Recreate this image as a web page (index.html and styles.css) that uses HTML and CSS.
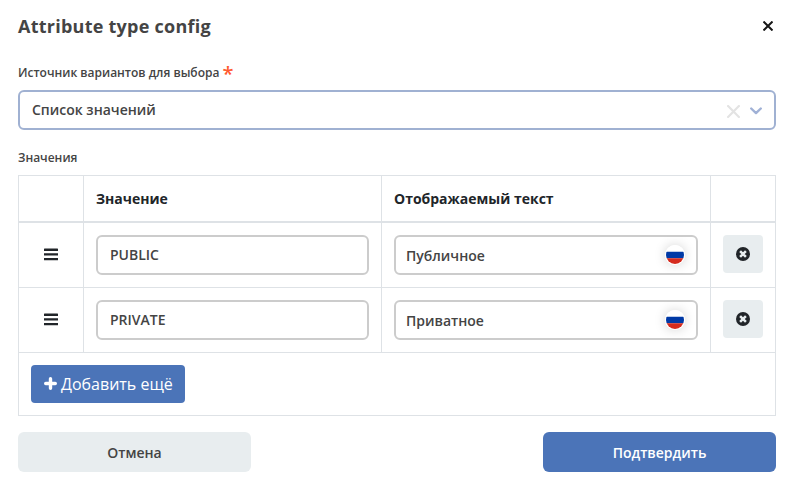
FILE: index.html
```html
<!DOCTYPE html>
<html lang="ru">
<head>
<meta charset="utf-8">
<title>Attribute type config</title>
<link rel="stylesheet" href="styles.css">
</head>
<body>
<svg width="0" height="0" class="defs">
  <symbol id="bars" viewBox="0 0 14 13"><path d="M.4.6h13.2q.4 0 .4.4v2H0V1Q0 .6.4.6zM0 5.2h14v2.4H0zM0 9.9h14V12q0 .3-.4.3H.4Q0 12.3 0 12z"/></symbol>
  <symbol id="remove" viewBox="0 0 14 14"><circle cx="7" cy="7" r="7"/><path d="M4.1 4.1l5.8 5.8M9.9 4.1L4.1 9.9" stroke="#e8edef" stroke-width="2.5"/></symbol>
  <symbol id="flag" viewBox="0 0 20 20"><clipPath id="round"><circle cx="10" cy="10" r="9"/></clipPath><circle cx="10" cy="10" r="10" fill="#fff"/><g clip-path="url(#round)"><path fill="#0039a6" d="M0 6.7h20v6.6H0z"/><path fill="#d52b1e" d="M0 13.3h20V20H0z"/></g></symbol>
</svg>
<main class="dialog">
  <header class="head">
    <h1 class="title">Attribute type config</h1>
    <svg class="close" viewBox="0 0 10 10"><path d="M.5.5l9 9M9.5.5l-9 9"/></svg>
  </header>
  <div class="label source">Источник вариантов для выбора <span class="star">*</span></div>
  <div class="select">
    <span class="select-text">Список значений</span>
    <svg class="clear" viewBox="0 0 12 12"><path d="M1 1l10 10M11 1L1 11"/></svg>
    <svg class="chevron" viewBox="0 0 12 8"><path d="M1.2 1.5l4.8 4.6 4.8-4.6"/></svg>
  </div>
  <div class="label values">Значения</div>
  <div class="table">
    <div class="row th">
      <div class="cell"></div><div class="cell">Значение</div><div class="cell">Отображаемый текст</div><div class="cell"></div>
    </div>
    <div class="row">
      <div class="cell grip"><svg class="bars"><use href="#bars"/></svg></div>
      <div class="cell"><div class="input">PUBLIC</div></div>
      <div class="cell"><div class="input localized"><span>Публичное</span><div class="flag"><svg><use href="#flag"/></svg></div></div></div>
      <div class="cell"><div class="remove"><svg><use href="#remove"/></svg></div></div>
    </div>
    <div class="row">
      <div class="cell grip"><svg class="bars"><use href="#bars"/></svg></div>
      <div class="cell"><div class="input">PRIVATE</div></div>
      <div class="cell"><div class="input localized"><span>Приватное</span><div class="flag"><svg><use href="#flag"/></svg></div></div></div>
      <div class="cell"><div class="remove"><svg><use href="#remove"/></svg></div></div>
    </div>
    <div class="foot">
      <div class="add"><svg viewBox="0 0 13 13"><path d="M6.5 1.7v9.6M1.7 6.5h9.6"/></svg><span>Добавить ещё</span></div>
    </div>
  </div>
  <footer class="actions">
    <div class="action cancel">Отмена</div>
    <div class="action confirm">Подтвердить</div>
  </footer>
</main>
</body>
</html>
```
FILE: styles.css
```css
* { box-sizing: border-box; }
body { margin: 0; background: #fff; color: #444; font-family: "Open Sans", "Noto Sans", sans-serif; font-size: 14px; font-weight: 600; }
svg { display: block; fill: none; stroke-linecap: round; stroke-linejoin: round; }
.defs { position: absolute; }
.dialog { width: 792px; height: 497px; padding: 14px 16px 0 18px; }
.head { display: flex; justify-content: space-between; height: 25px; }
.title { margin: 0; font-size: 18px; line-height: 25px; font-weight: 700; letter-spacing: .25px; }
.close { width: 10px; height: 10px; margin: 7px 3px 0 0; stroke: #161616; stroke-width: 2; stroke-linecap: butt; }
.label { font-size: 12px; line-height: 18px; }
.source { display: flex; margin-top: 25px; height: 18px; }
.star { margin-left: 3px; color: #ff5a30; font-size: 20px; line-height: 19px; }
.select { display: flex; align-items: center; margin-top: 8px; height: 40px; border: 2px solid #a0b1d2; border-radius: 6px; padding: 0 12px; }
.select-text { flex: 1; line-height: 20px; }
.clear { width: 13px; height: 13px; margin: 3px 10px 0 0; stroke: #e3e3e3; stroke-width: 2; }
.chevron { width: 12px; height: 8px; margin-top: 2px; stroke: #a0b1d6; stroke-width: 2.4; }
.values { margin-top: 19px; }
.table { margin-top: 8px; border: solid #dee2e6; border-width: 1px 1px 0 1px; }
.row { display: grid; grid-template-columns: 64px 298px 329px 65px; height: 65px; border-bottom: 1px solid #dee2e6; }
.th { height: 47px; border-bottom-width: 2px; color: #212529; font-weight: 700; }
.cell { padding: 12px; }
.cell + .cell { border-left: 1px solid #dee2e6; }
.th .cell { line-height: 22px; }
.grip { display: flex; justify-content: center; padding-top: 25px; }
.bars { width: 14px; height: 13px; fill: #212529; }
.input { display: flex; align-items: center; height: 40px; border: 2px solid #ccc; border-radius: 6px; padding: 0 12px; line-height: 20px; }
.localized { justify-content: space-between; padding: 2px 11px 0 10px; }
.flag { width: 20px; height: 20px; margin: -2px 0 0; border-radius: 50%; box-shadow: 0 0 12px rgba(0, 0, 0, .18); }
.flag svg { width: 20px; height: 20px; }
.remove { display: grid; place-items: center; width: 40px; height: 38px; border-radius: 4px; background: #e8edef; }
.remove svg { width: 14px; height: 14px; fill: #212529; stroke-linecap: butt; }
.foot { height: 63px; padding: 12px; border-bottom: 1px solid #dee2e6; }
.add { display: flex; align-items: center; width: 154px; height: 38px; padding: 0 12px 0 13px; border-radius: 4px; background: #4b74b8; color: #fff; font-size: 16px; font-weight: 400; }
.add svg { width: 13px; height: 13px; margin: -1px 4px 0 0; stroke: #fff; stroke-width: 3.4; }
.actions { display: flex; justify-content: space-between; margin-top: 16px; }
.action { width: 233px; height: 40px; border-radius: 6px; line-height: 41px; text-align: center; }
.cancel { background: #e8edef; }
.confirm { background: #4b74b8; color: #fff; }
```
